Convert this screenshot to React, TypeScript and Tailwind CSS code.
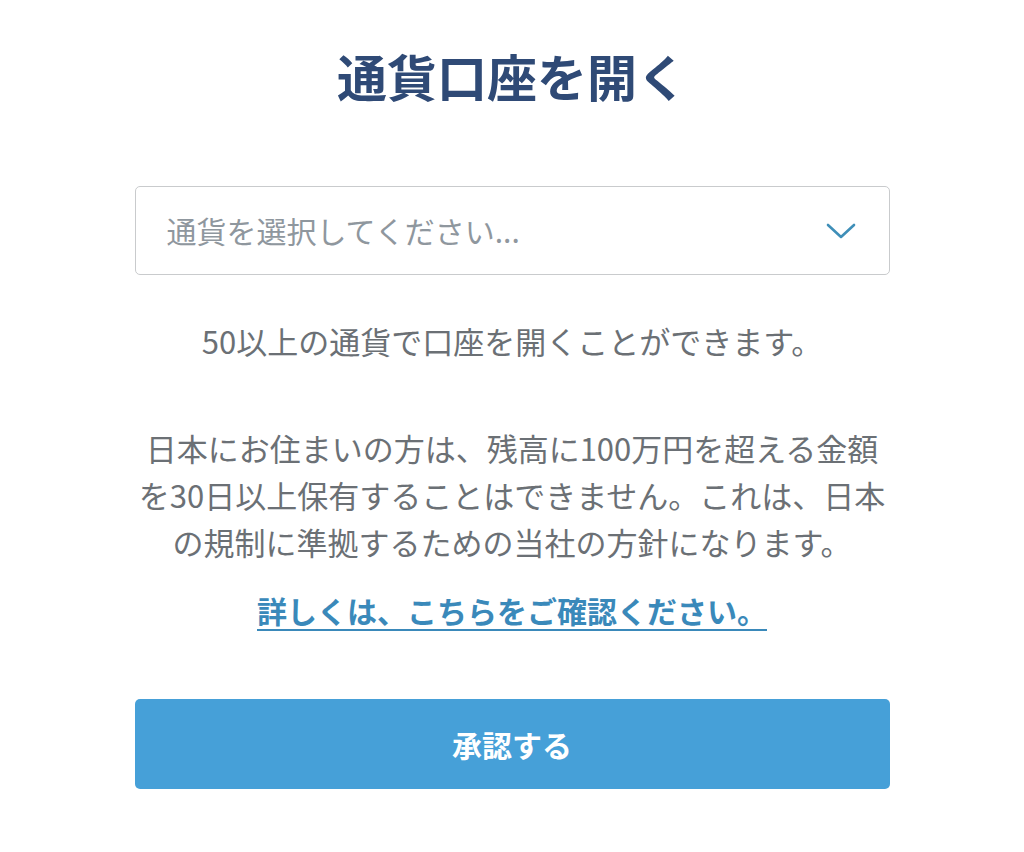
const App = () => {
  return (
    <div className="min-h-screen bg-white font-['Noto_Sans_CJK_JP',sans-serif]">
      <main className="w-[755px] mx-auto pt-[44px] flex flex-col items-center">
        <h1 className="text-[50px] leading-[62px] font-bold text-[#2f4a76]">
          通貨口座を開く
        </h1>

        <button
          type="button"
          className="mt-[80px] w-full h-[89px] border border-[#c9cbcd] rounded-[5px] flex items-center justify-between pl-[31px] pr-[33px] bg-white"
        >
          <span className="text-[30px] text-[#8f979e]">通貨を選択してください...</span>
          <svg width="30" height="16" viewBox="0 0 30 16" fill="none" className="text-[#3f8fb8]">
            <polyline
              points="2,2 15,14 28,2"
              stroke="currentColor"
              strokeWidth="2.6"
              strokeLinecap="round"
              strokeLinejoin="round"
            />
          </svg>
        </button>

        <p className="mt-[46px] text-[31px] leading-[40px] text-[#6b7075]">
          50以上の通貨で口座を開くことができます。
        </p>

        <p className="mt-[63px] text-[31px] leading-[47px] text-[#6b7075] text-center">
          日本にお住まいの方は、残高に100万円を超える金額
          <br />
          を30日以上保有することはできません。これは、日本
          <br />
          の規制に準拠するための当社の方針になります。
        </p>

        <a
          href="#"
          className="mt-[25px] text-[30px] leading-[40px] font-bold text-[#3a89ba] underline underline-offset-[6px] decoration-2"
        >
          詳しくは、こちらをご確認ください。
        </a>

        <button
          type="button"
          className="mt-[69px] w-full h-[90px] rounded-[5px] bg-[#46a0d8] text-white text-[30px] font-bold"
        >
          承認する
        </button>
      </main>
    </div>
  );
};

export default App;
